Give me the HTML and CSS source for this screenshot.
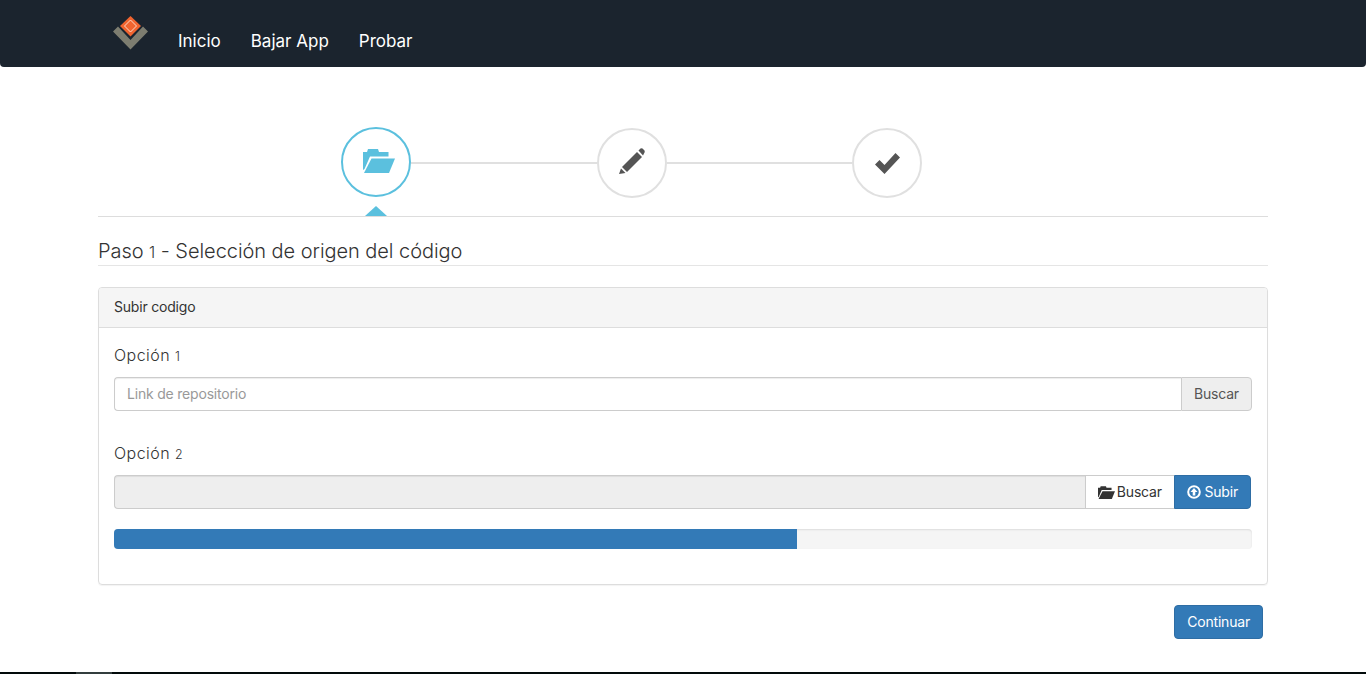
FILE: index.html
```html
<!DOCTYPE html>
<html lang="es">

<head>
    <meta charset="UTF-8">
    <meta name="viewport" content="width=device-width, initial-scale=1.0">
    <title>Paso 1 - Selección de origen del código</title>
    <link rel="stylesheet" href="styles.css">
</head>

<body>
    <div class="page">
        <nav class="navbar">
            <a class="brand" href="#">
                <svg width="36" height="36" viewBox="0 0 36 36">
                    <path d="M0 16.500 L5 11.500 L17.500 25 L30 11.500 L35 16.500 L17.500 34.500 Z" fill="#7d7d70" />
                    <path d="M17.500 1 L28 11 L17.500 21.500 L7 11 Z" fill="#f0642f" />
                    <path d="M17.500 5 L23.500 11 L17.500 17 L11.500 11 Z" fill="none" stroke="#fbd9c8" stroke-width="1" />
                </svg>
            </a>
            <a class="nav-link" href="#">Inicio</a>
            <a class="nav-link" href="#">Bajar App</a>
            <a class="nav-link" href="#">Probar</a>
        </nav>

        <main class="container">
            <div class="wizard">
                <div class="step active">
                    <svg class="step-icon icon-folder" width="32" height="24" viewBox="0 0 32 24">
                        <path d="M0 21 V3 H4 L5 0 H15 L16 3 H25.500 V7.500 H7 L1.500 20 Z" fill="#5bc0de" />
                        <path d="M8.500 9.500 H32 L26 24 H1 Z" fill="#5bc0de" />
                    </svg>
                    <span class="step-arrow"></span>
                </div>
                <div class="connector"></div>
                <div class="step">
                    <svg class="step-icon icon-pencil" width="26" height="26" viewBox="0 0 26 26">
                        <path d="M0 26 L2 20.500 L6.500 25 Z" fill="#555" />
                        <path d="M3 19 L18 4 L23 9 L8 24 Z" fill="#555" />
                        <path d="M19.500 2.500 L21.500 0.500 Q22.500 0 23.500 0.500 L25.500 2.500 Q26 3.500 25.500 4.500 L24 7.500 Z" fill="#555" />
                    </svg>
                </div>
                <div class="connector"></div>
                <div class="step">
                    <svg class="step-icon" width="25" height="21" viewBox="0 0 25 21">
                        <path d="M0 11.500 L4.500 7 L9.500 12 L20.500 0 L25 4.500 L9.500 21 Z" fill="#555" />
                    </svg>
                </div>
            </div>

            <h3 class="step-title">Paso <span class="old-num">1</span> - Selección de origen del código</h3>

            <section class="panel">
                <div class="panel-heading">Subir codigo</div>
                <div class="panel-body">
                    <label class="option-label">Opción <span class="old-num">1</span></label>
                    <div class="input-group">
                        <input class="form-control" type="text" placeholder="Link de repositorio">
                        <span class="addon">Buscar</span>
                    </div>

                    <label class="option-label second">Opción <span class="old-num">2</span></label>
                    <div class="input-group">
                        <input class="form-control" type="text" disabled>
                        <button class="btn btn-default">
                            <svg class="icon-open" width="17" height="13" viewBox="0 0 32 24">
                                <path d="M0 21 V3 H4 L5 0 H15 L16 3 H25.500 V7.500 H7 L1.500 20 Z" fill="#333" />
                                <path d="M8.500 9.500 H32 L26 24 H1 Z" fill="#333" />
                            </svg>
                            Buscar
                        </button>
                        <button class="btn btn-primary btn-end">
                            <svg width="14" height="14" viewBox="0 0 14 14">
                                <circle cx="7" cy="7" r="5.800" fill="none" stroke="#fff" stroke-width="2" />
                                <path d="M7 3 L10.500 7 H8.300 V10.500 H5.700 V7 H3.500 Z" fill="#fff" />
                            </svg>
                            Subir
                        </button>
                    </div>

                    <div class="progress">
                        <div class="progress-bar" style="width: 60%"></div>
                    </div>
                </div>
            </section>

            <div class="actions">
                <button class="btn btn-primary btn-round">Continuar</button>
            </div>
        </main>

        <div class="taskbar"><span class="taskbar-item"></span></div>
    </div>
</body>

</html>
```

FILE: styles.css
```css
* {
    box-sizing: border-box;
}

body {
    margin: 0;
    font-family: "Inter", "Lato", sans-serif;
    font-size: 14px;
    letter-spacing: -0.2px;
    color: #333;
    background-color: #fff;
}

.page {
    height: 674px;
    display: flex;
    flex-direction: column;
    overflow: hidden;
}

.navbar {
    height: 67px;
    flex-shrink: 0;
    display: flex;
    align-items: flex-start;
    padding-left: 113px;
    background-color: #1b242e;
    border-radius: 0 0 4px 4px;
}

.brand {
    display: block;
    height: 36px;
    margin-top: 15px;
    margin-right: 14px;
}

.nav-link {
    padding: 31px 15px 0;
    color: #fff;
    font-size: 17px;
    letter-spacing: 0;
    line-height: 21px;
    text-decoration: none;
}

.container {
    width: 1170px;
    margin: 0 auto;
}

.wizard {
    display: flex;
    align-items: flex-start;
    height: 90px;
    margin-top: 60px;
    padding-left: 243px;
    border-bottom: 1px solid #ddd;
}

.step {
    position: relative;
    width: 70px;
    height: 70px;
    flex-shrink: 0;
    margin-top: 1px;
    display: flex;
    align-items: center;
    justify-content: center;
    border: 2px solid #e0e0e0;
    border-radius: 50%;
    background-color: #fff;
}

.step.active {
    margin-top: 0;
    border-color: #5bc0de;
}

.icon-folder {
    margin: 0 0 2px 5px;
}

.icon-pencil {
    margin-bottom: 4px;
}

.step-arrow {
    position: absolute;
    left: 22px;
    bottom: -21px;
    width: 0;
    height: 0;
    border-left: 11px solid transparent;
    border-right: 11px solid transparent;
    border-bottom: 10px solid #5bc0de;
}

.connector {
    width: 185.5px;
    height: 2px;
    margin-top: 35px;
    background-color: #e0e0e0;
}

.step-title {
    margin: 22px 0 0;
    padding-bottom: 2px;
    font-size: 20px;
    font-weight: 300;
    letter-spacing: -0.05px;
    line-height: 24px;
    color: #333;
    border-bottom: 1px solid #e5e5e5;
}

.old-num {
    font-size: 0.78em;
    line-height: 1;
}

.panel {
    margin-top: 21px;
    border: 1px solid #ddd;
    border-radius: 4px;
    box-shadow: 0 1px 1px rgba(0, 0, 0, 0.05);
}

.panel-heading {
    height: 40px;
    padding: 10px 15px;
    line-height: 18px;
    color: #333;
    background-color: #f5f5f5;
    border-bottom: 1px solid #ddd;
    border-radius: 3px 3px 0 0;
}

.panel-body {
    padding: 15px;
    height: 256px;
}

.option-label {
    display: block;
    font-size: 16px;
    font-weight: 300;
    letter-spacing: 0.45px;
    line-height: 24px;
    margin-bottom: 10px;
}

.option-label.second {
    margin-top: 30px;
}

.input-group {
    display: flex;
    height: 34px;
}

.form-control {
    flex: 1;
    min-width: 0;
    height: 34px;
    padding: 5px 12px 7px;
    font-family: inherit;
    font-size: 14px;
    letter-spacing: -0.2px;
    color: #555;
    background-color: #fff;
    border: 1px solid #ccc;
    border-right: 0;
    border-radius: 4px 0 0 4px;
    box-shadow: inset 0 1px 1px rgba(0, 0, 0, 0.075);
}

.form-control::placeholder {
    color: #999;
}

.form-control:disabled {
    background-color: #eee;
}

.addon {
    width: 71px;
    padding-bottom: 2px;
    display: flex;
    align-items: center;
    justify-content: center;
    color: #555;
    background-color: #eee;
    border: 1px solid #ccc;
    border-radius: 0 4px 4px 0;
}

.btn {
    height: 34px;
    padding: 6px 12px;
    font-family: inherit;
    font-size: 14px;
    letter-spacing: -0.2px;
    line-height: 20px;
    white-space: nowrap;
    cursor: pointer;
    border: 1px solid transparent;
}

.btn svg {
    vertical-align: -2px;
}

.btn .icon-open {
    margin-right: -2px;
}

.btn-default {
    color: #333;
    background-color: #fff;
    border-color: #ccc;
    border-right: 0;
}

.btn-primary {
    color: #fff;
    background-color: #337ab7;
    border-color: #2e6da4;
}

.btn-end {
    margin-right: 1px;
    border-radius: 0 4px 4px 0;
}

.btn-round {
    border-radius: 4px;
}

.progress {
    height: 20px;
    margin-top: 20px;
    overflow: hidden;
    background-color: #f5f5f5;
    border-radius: 4px;
    box-shadow: inset 0 1px 2px rgba(0, 0, 0, 0.1);
}

.progress-bar {
    height: 100%;
    background-color: #337ab7;
}

.actions {
    display: flex;
    justify-content: flex-end;
    margin-top: 20px;
    padding-right: 5px;
}

.taskbar {
    height: 2px;
    margin-top: auto;
    flex-shrink: 0;
    background-color: #020a0a;
}

.taskbar-item {
    display: block;
    width: 36px;
    height: 2px;
    margin-left: 76px;
    background-color: #333d3d;
}
```
